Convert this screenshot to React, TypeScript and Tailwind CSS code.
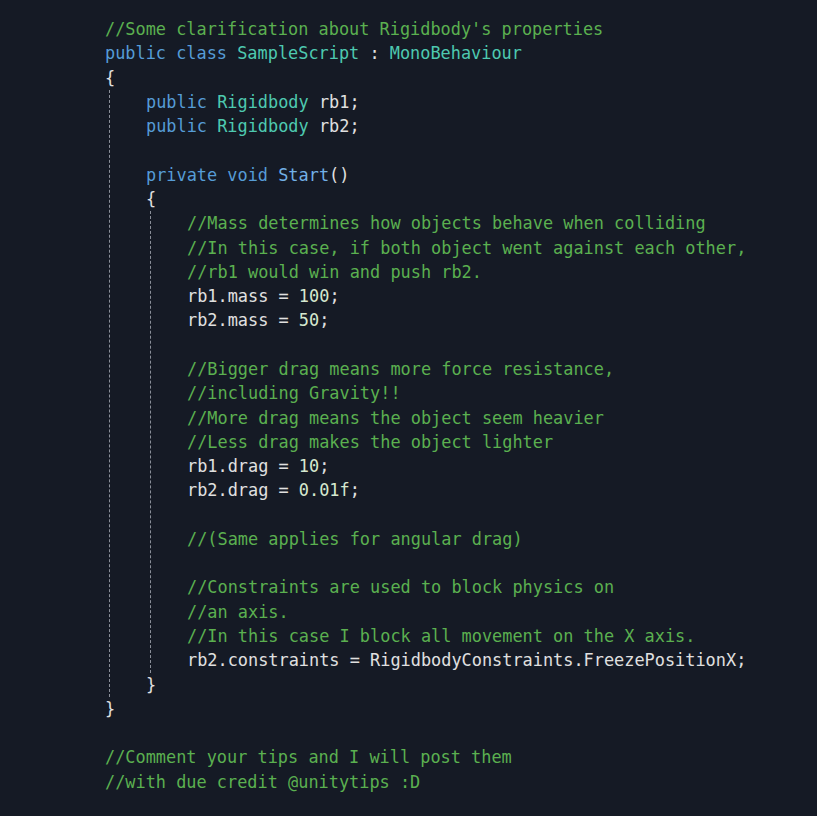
import React from "react";

type Tok = [string, string];
const C = "text-[#5bb050]"; // comment
const K = "text-[#569cd6]"; // keyword
const T = "text-[#4ec9b0]"; // type
const P = "text-[#e0e0e0]"; // plain
const N = "text-[#d5e8cf]"; // number
const M = "text-[#72b0e6]"; // method

const Line = ({ toks }: { toks: Tok[] }) => (
  <div className="h-[24.29px] leading-[24.29px] whitespace-pre">
    {toks.length === 0 ? "\u00a0" : toks.map((t, i) => <span key={i} className={t[1]}>{t[0]}</span>)}
  </div>
);

const inner: Tok[][] = [
  [["//Mass determines how objects behave when colliding", C]],
  [["//In this case, if both object went against each other,", C]],
  [["//rb1 would win and push rb2.", C]],
  [["rb1.mass = ", P], ["100", N], [";", P]],
  [["rb2.mass = ", P], ["50", N], [";", P]],
  [],
  [["//Bigger drag means more force resistance,", C]],
  [["//including Gravity!!", C]],
  [["//More drag means the object seem heavier", C]],
  [["//Less drag makes the object lighter", C]],
  [["rb1.drag = ", P], ["10", N], [";", P]],
  [["rb2.drag = ", P], ["0.01f", N], [";", P]],
  [],
  [["//(Same applies for angular drag)", C]],
  [],
  [["//Constraints are used to block physics on", C]],
  [["//an axis.", C]],
  [["//In this case I block all movement on the X axis.", C]],
  [["rb2.constraints = RigidbodyConstraints.FreezePositionX;", P]],
];

export default function App() {
  return (
    <div
      className="w-[817px] h-[816px] bg-[#151a25] pt-[17px] pl-[105px] text-[16.9px] text-[#e0e0e0]"
      style={{ fontFamily: '"DejaVu Sans Mono", "Liberation Mono", monospace' }}
    >
      <Line toks={[["//Some clarification about Rigidbody's properties", C]]} />
      <Line toks={[["public class ", K], ["SampleScript", T], [" : ", P], ["MonoBehaviour", T]]} />
      <Line toks={[["{", P]]} />
      <div className="ml-[4px] border-l border-dashed border-[#8a8f99] pl-[36px]">
        <Line toks={[["public ", K], ["Rigidbody", T], [" rb1;", P]]} />
        <Line toks={[["public ", K], ["Rigidbody", T], [" rb2;", P]]} />
        <Line toks={[]} />
        <Line toks={[["private void ", K], ["Start", M], ["()", P]]} />
        <Line toks={[["{", P]]} />
        <div className="ml-[4px] border-l border-dashed border-[#8a8f99] pl-[36px]">
          {inner.map((l, i) => (
            <Line key={i} toks={l} />
          ))}
        </div>
        <Line toks={[["}", P]]} />
      </div>
      <Line toks={[["}", P]]} />
      <Line toks={[]} />
      <Line toks={[["//Comment your tips and I will post them", C]]} />
      <Line toks={[["//with due credit @unitytips :D", C]]} />
    </div>
  );
}
